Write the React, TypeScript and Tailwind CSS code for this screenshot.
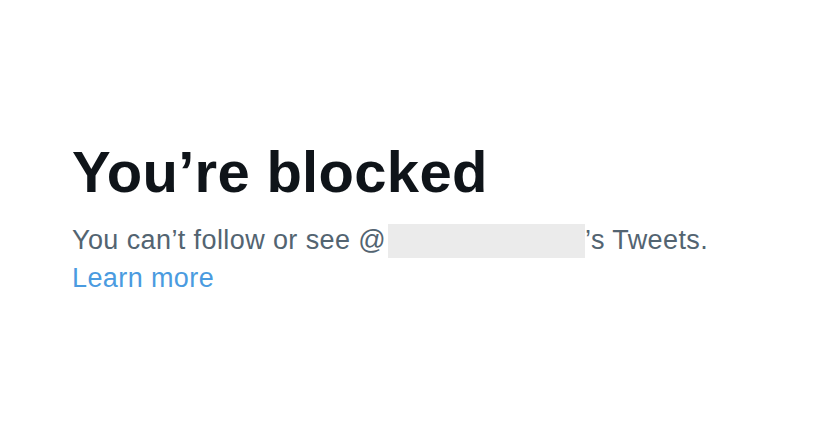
export default function App() {
  return (
    <div
      className="min-h-[428px] w-full bg-white pl-[72px] pt-[137px]"
      style={{ fontFamily: '"Liberation Sans", Arial, sans-serif' }}
    >
      <h1 className="text-[58px] font-bold leading-[70px] tracking-[0.3px] text-[#0f1419]">
        You’re blocked
      </h1>
      <p className="mt-[14px] text-[27px] leading-[38px] tracking-[0.4px] text-[#536471]">
        You can’t follow or see @
        <span className="ml-[2px] inline-block h-[34px] w-[197px] bg-[#ebebeb] align-[-9px]" />
        ’s Tweets.
        <br />
        <a href="#" className="text-[#4a9be0]">
          Learn more
        </a>
      </p>
    </div>
  );
}
